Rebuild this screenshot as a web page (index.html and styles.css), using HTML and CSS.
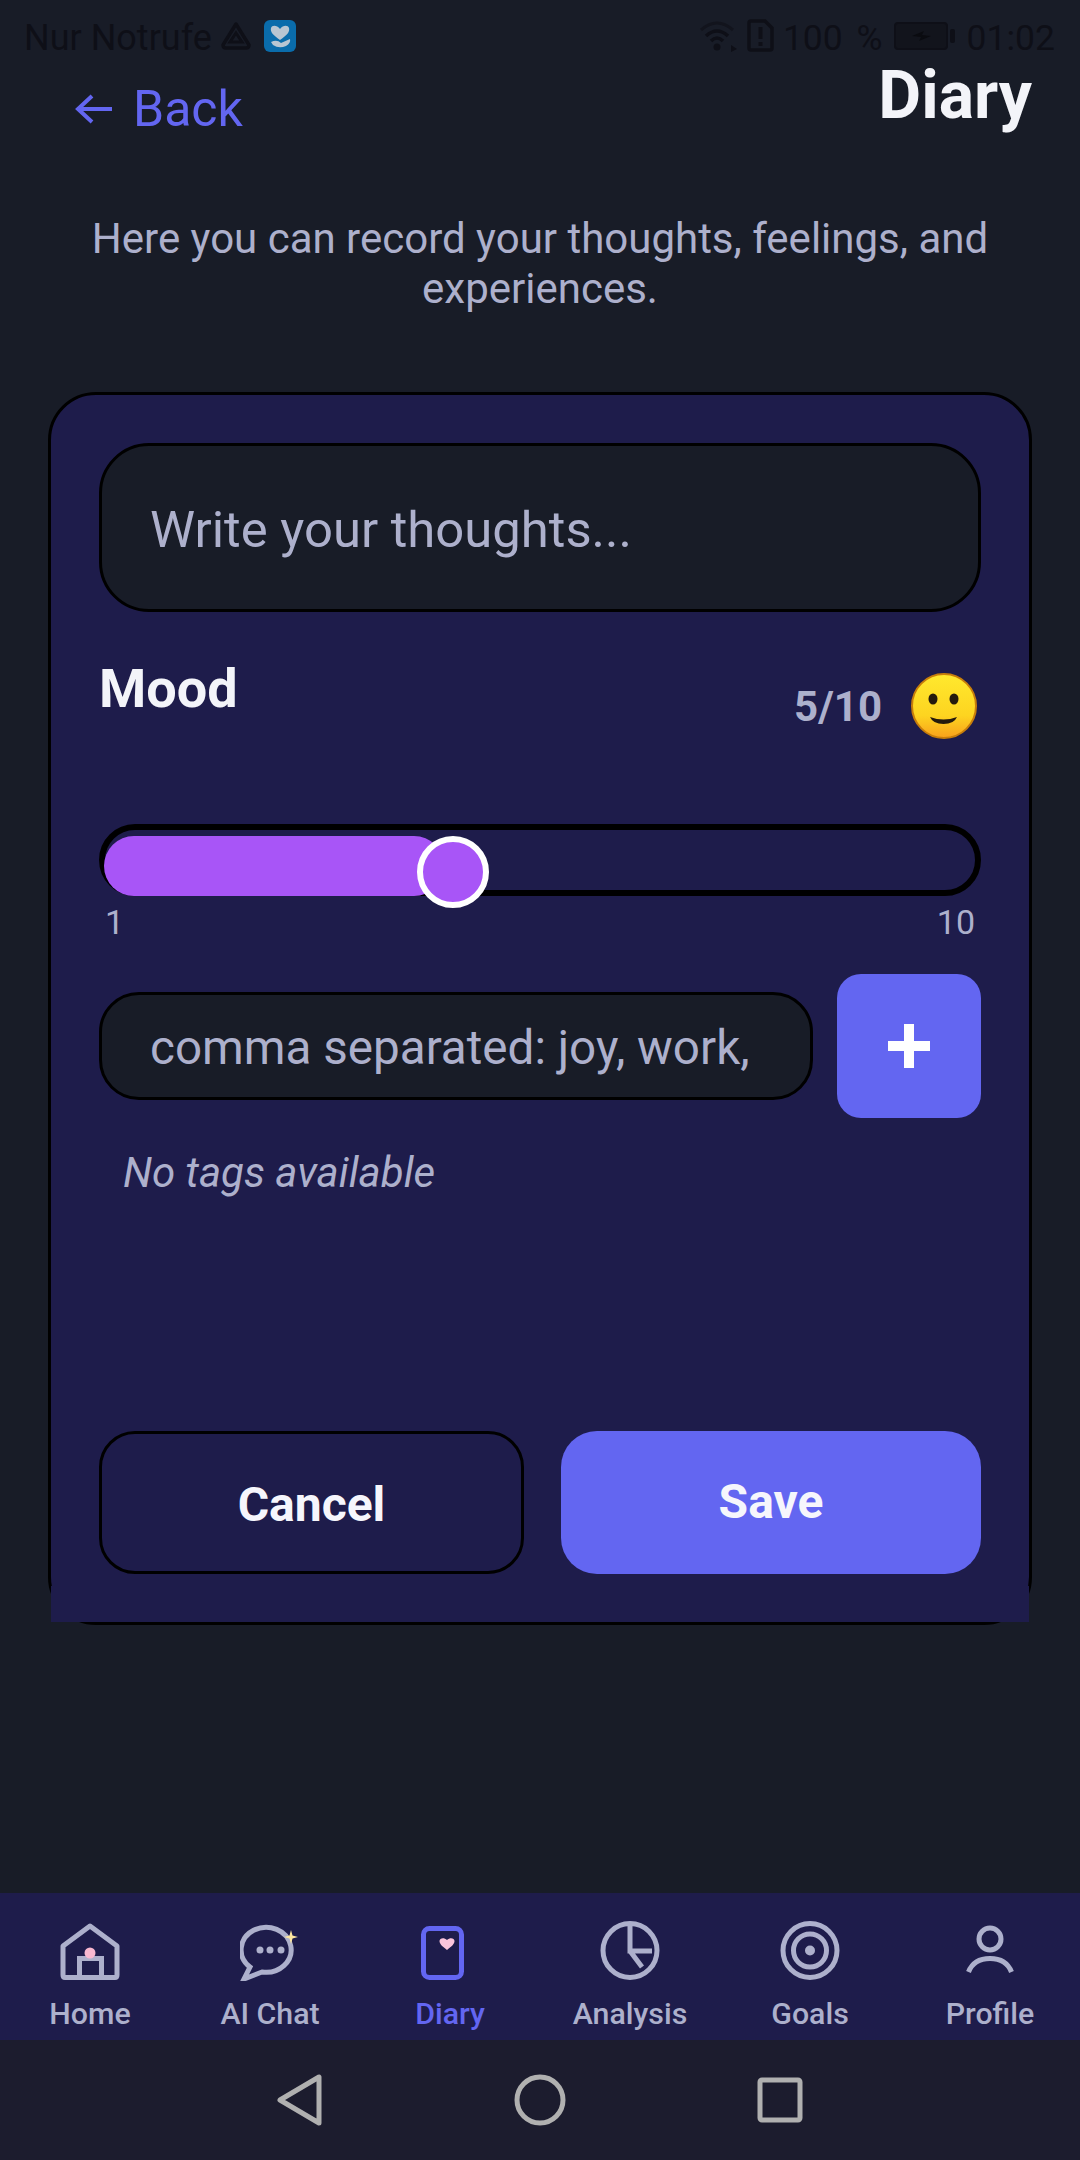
FILE: index.html
```html
<!DOCTYPE html>
<html>
<head>
    <title>Diary</title>
    <link rel="stylesheet" href="styles.css">
</head>
<body>

    <div class="status-bar">
        <div class="status-left">
            <span>Nur Notrufe</span>
            <svg class="drive-icon" width="32" height="30" viewBox="0 0 32 30">
                <path d="M16 3 L29 24 Q29 27 26 27 H6 Q3 27 3 24 Z" fill="none" stroke="#0e0f17" stroke-width="3.5" stroke-linejoin="round"/>
                <path d="M16 12 L22 21 H10 Z" fill="none" stroke="#0e0f17" stroke-width="3"/>
            </svg>
            <svg class="app-icon" width="32" height="32" viewBox="0 0 32 32">
                <rect width="32" height="32" rx="6" fill="#0a6cab"/>
                <path d="M16 20 C9 15 6 12 7 8 C8 5 13 5 16 9 C19 5 24 5 25 8 C26 12 23 15 16 20 Z" fill="#b9c6d2"/>
                <path d="M7 22 Q13 19 17 23 L26 19 Q27 23 22 26 Q15 29 9 25 Z" fill="#b9c6d2"/>
            </svg>
        </div>
        <div class="status-right">
            <svg width="38" height="34" viewBox="0 0 38 34">
                <path d="M1 11 Q17 -3 33 11" fill="none" stroke="#12141d" stroke-width="3"/>
                <path d="M6 17 Q17 7 28 17" fill="none" stroke="#0e0f17" stroke-width="3.5"/>
                <path d="M11 22 Q17 16 23 22" fill="none" stroke="#0e0f17" stroke-width="3.5"/>
                <circle cx="17" cy="28" r="3.5" fill="#0e0f17"/>
                <path d="M31 26 L37 30 L31 33 Z" fill="#0e0f17"/>
            </svg>
            <svg class="sim-icon" width="27" height="33" viewBox="0 0 27 33">
                <path d="M2 4 Q2 2 4 2 H18 L25 9 V29 Q25 31 23 31 H4 Q2 31 2 29 Z" fill="none" stroke="#0e0f17" stroke-width="3.5"/>
                <rect x="11.500" y="8" width="4" height="12" fill="#0e0f17"/>
                <rect x="11.500" y="23" width="4" height="4" fill="#0e0f17"/>
            </svg>
            <span class="battery-level">100 %</span>
            <svg class="battery-icon" width="62" height="30" viewBox="0 0 62 30">
                <rect x="1" y="2" width="52" height="26" rx="3" fill="#12141c" stroke="#0e0f17" stroke-width="2"/>
                <rect x="56" y="8" width="5" height="14" rx="2" fill="#0e0f17"/>
                <path d="M18 15 L30 10 L28 14 L37 15 L25 20 L27 16 Z" fill="#0a0b10"/>
            </svg>
            <span>01:02</span>
        </div>
    </div>

    <div class="header">
        <div class="back-link">
            <svg width="38" height="32" viewBox="0 0 38 32">
                <path d="M17 3 L3 16 L17 29 M3 16 H37" fill="none" stroke="#6366f1" stroke-width="4"/>
            </svg>
            <span>Back</span>
        </div>
        <div class="page-title">Diary</div>
    </div>

    <p class="intro">Here you can record your thoughts, feelings, and experiences.</p>

    <div class="card">
        <div class="entry-input">Write your thoughts...</div>

        <div class="mood-row">
            <div class="mood-label">Mood</div>
            <div class="mood-value">
                <span>5/10</span>
                <svg width="68" height="68" viewBox="0 0 68 68">
                    <defs>
                        <linearGradient id="faceFill" x1="0" y1="0" x2="0" y2="1">
                            <stop offset="0" stop-color="#ffe92e"/>
                            <stop offset="0.65" stop-color="#fdd420"/>
                            <stop offset="1" stop-color="#f9a01b"/>
                        </linearGradient>
                    </defs>
                    <circle cx="34" cy="34" r="32" fill="url(#faceFill)" stroke="#c77d0a" stroke-width="2"/>
                    <ellipse cx="23" cy="27" rx="4.500" ry="5.500" fill="#241a0d"/>
                    <ellipse cx="44" cy="27" rx="4.500" ry="5.500" fill="#241a0d"/>
                    <path d="M20 45 Q33.500 50 47 45 Q44 52 33.500 52 Q23 52 20 45 Z" fill="#241a0d"/>
                </svg>
            </div>
        </div>

        <div class="slider">
            <div class="slider-fill"></div>
            <div class="slider-thumb"></div>
        </div>
        <div class="slider-labels">
            <span>1</span>
            <span>10</span>
        </div>

        <div class="tag-row">
            <div class="tag-input">comma separated: joy, work,</div>
            <div class="tag-add">
                <svg width="42" height="44" viewBox="0 0 42 44">
                    <path d="M16 0 H26 V17 H42 V27 H26 V44 H16 V27 H0 V17 H16 Z" fill="#ffffff"/>
                </svg>
            </div>
        </div>
        <div class="no-tags">No tags available</div>

        <div class="actions">
            <div class="btn-cancel">Cancel</div>
            <div class="btn-save">Save</div>
        </div>
    </div>

    <div class="tab-bar">
        <div class="tab">
            <svg width="60" height="60" viewBox="0 0 60 60" fill="none" stroke="#adb0cc" stroke-width="5">
                <path d="M30 5 L57 25 V54 Q57 56.500 55 56.500 H5 Q3 56.500 3 54 V25 Z" stroke-linejoin="round"/>
                <rect x="19.500" y="37.500" width="22" height="19"/>
                <circle cx="30" cy="32" r="5.500" fill="#f9b8d0" stroke="none"/>
            </svg>
            <span>Home</span>
        </div>
        <div class="tab">
            <svg width="60" height="60" viewBox="0 0 60 60" fill="none" stroke="#adb0cc" stroke-width="5">
                <path d="M10 46 A25 22.500 0 1 1 22 51 L4 58 Z" stroke-linejoin="miter"/>
                <circle cx="20" cy="29" r="3.500" fill="#adb0cc" stroke="none"/>
                <circle cx="30" cy="29" r="3.500" fill="#adb0cc" stroke="none"/>
                <circle cx="41" cy="29" r="3.500" fill="#adb0cc" stroke="none"/>
                <path d="M51 9 L52.500 14.500 L58 16 L52.500 17.500 L51 23 L49.500 17.500 L44 16 L49.500 14.500 Z" fill="#fde6a0" stroke="none"/>
            </svg>
            <span>AI Chat</span>
        </div>
        <div class="tab active">
            <svg width="60" height="60" viewBox="0 0 60 60" fill="none" stroke="#6366f1" stroke-width="5">
                <rect x="3.500" y="7.500" width="38" height="49" rx="6"/>
                <path d="M27 29 C22 25 19.500 23 19.500 20 C19.500 17 24 16 27 19 C30 16 34.500 17 34.500 20 C34.500 23 32 25 27 29 Z" fill="#fbc4dc" stroke="none"/>
            </svg>
            <span>Diary</span>
        </div>
        <div class="tab">
            <svg width="60" height="60" viewBox="0 0 60 60" fill="none" stroke="#adb0cc" stroke-width="5">
                <circle cx="30" cy="29.500" r="27"/>
                <path d="M30 3 V30 H52 M30 30 L42 46"/>
            </svg>
            <span>Analysis</span>
        </div>
        <div class="tab">
            <svg width="60" height="60" viewBox="0 0 60 60" fill="none" stroke="#adb0cc" stroke-width="5">
                <circle cx="30" cy="29.500" r="27"/>
                <circle cx="30" cy="29.500" r="16.500"/>
                <circle cx="30" cy="29.500" r="5" fill="#adb0cc" stroke="none"/>
            </svg>
            <span>Goals</span>
        </div>
        <div class="tab">
            <svg width="60" height="60" viewBox="0 0 60 60" fill="none" stroke="#adb0cc" stroke-width="5">
                <circle cx="30" cy="18" r="11"/>
                <path d="M8.500 51 C12 42 20 37.500 30 37.500 C40 37.500 48 42 51.500 51"/>
            </svg>
            <span>Profile</span>
        </div>
    </div>

    <div class="nav-bar">
        <div class="nav-btn">
            <svg width="50" height="54" viewBox="0 0 50 54" fill="none" stroke="#b0b0b0" stroke-width="5" stroke-linejoin="round">
                <path d="M44 4 V50 L5 27 Z"/>
            </svg>
        </div>
        <div class="nav-btn">
            <svg width="52" height="52" viewBox="0 0 52 52" fill="none" stroke="#b0b0b0" stroke-width="5">
                <circle cx="26" cy="26" r="23"/>
            </svg>
        </div>
        <div class="nav-btn">
            <svg width="46" height="46" viewBox="0 0 46 46" fill="none" stroke="#b0b0b0" stroke-width="5" stroke-linejoin="round">
                <rect x="3" y="3" width="40" height="40" rx="2"/>
            </svg>
        </div>
    </div>

</body>
</html>
```

FILE: styles.css
```css
* {
    box-sizing: border-box;
}
body {
    display: flex;
    flex-direction: column;
    width: 1080px;
    height: 2160px;
    margin: 0;
    overflow: hidden;
    background-color: #181c27;
    font-family: 'Roboto', sans-serif;
    color: #adb0cc;
}

/* Status bar */
.status-bar {
    display: flex;
    justify-content: space-between;
    align-items: center;
    height: 59px;
    padding: 12px 25px 0 24px;
    color: #0e0f17;
}
.status-bar span {
    padding-top: 4px;
}
.status-left,
.status-right {
    display: flex;
    align-items: center;
}
.status-left {
    font-size: 36px;
}
.status-right {
    font-size: 35.5px;
}
.battery-level {
    word-spacing: 5px;
}
.drive-icon {
    margin-left: 8px;
}
.app-icon {
    margin-left: 12px;
}
.sim-icon {
    margin: 0 9px;
}
.battery-icon {
    margin: 0 11px;
}

/* Header */
.header {
    display: flex;
    justify-content: space-between;
    align-items: flex-start;
    padding: 0 48px 0 75px;
}
.back-link {
    display: flex;
    align-items: center;
    gap: 20px;
    margin-top: 21px;
    font-size: 50px;
    color: #6366f1;
}
.page-title {
    margin-top: -2px;
    font-size: 66px;
    font-weight: 700;
    color: #f3f4f9;
}
.intro {
    margin: 76px 70px 0;
    font-size: 42px;
    line-height: 50px;
    text-align: center;
}

/* Card */
.card {
    position: relative;
    width: 984px;
    height: 1233px;
    margin: 78px 0 0 48px;
    padding: 48px;
    border: 3px solid #000000;
    border-radius: 48px;
    background-color: #1e1c4b;
}
.card::after {
    content: "";
    position: absolute;
    left: 0;
    right: 0;
    bottom: 0;
    height: 36px;
    background-color: #1e1c4b;
}
.entry-input {
    display: flex;
    align-items: center;
    height: 169px;
    padding: 4px 48px 0;
    border: 3px solid #000000;
    border-radius: 50px;
    background-color: #181c27;
    font-size: 50.8px;
}

.mood-row {
    display: flex;
    justify-content: space-between;
    align-items: flex-start;
    height: 212px;
    padding: 45px 3px 0 0;
}
.mood-label {
    font-size: 54px;
    font-weight: 700;
    color: #f3f4f9;
}
.mood-value {
    display: flex;
    align-items: center;
    gap: 28px;
    margin-top: 15px;
    font-size: 42px;
    font-weight: 700;
}

.slider {
    position: relative;
    height: 72px;
    border: 6px solid #000000;
    border-radius: 36px;
}
.slider-fill {
    position: absolute;
    left: -1px;
    top: 6px;
    bottom: -6px;
    width: 340px;
    border-radius: 30px;
    background-color: #a855f7;
}
.slider-thumb {
    position: absolute;
    left: 312px;
    top: 6px;
    width: 72px;
    height: 72px;
    border: 6px solid #ffffff;
    border-radius: 50%;
    background-color: #a855f7;
}
.slider-labels {
    display: flex;
    justify-content: space-between;
    padding: 6px 6px 0;
    font-size: 34px;
}

.tag-row {
    display: flex;
    justify-content: space-between;
    align-items: center;
    margin-top: 32px;
}
.tag-input {
    display: flex;
    align-items: center;
    width: 714px;
    height: 108px;
    padding: 4px 48px 0;
    overflow: hidden;
    border: 3px solid #000000;
    border-radius: 40px;
    background-color: #181c27;
    font-size: 47.6px;
    white-space: nowrap;
}
.tag-add {
    display: flex;
    justify-content: center;
    align-items: center;
    width: 144px;
    height: 144px;
    border-radius: 24px;
    background-color: #6366f1;
}
.no-tags {
    margin: 30px 0 0 24px;
    font-size: 42px;
    font-style: italic;
}

.actions {
    display: flex;
    justify-content: space-between;
    margin-top: 234px;
}
.btn-cancel,
.btn-save {
    display: flex;
    justify-content: center;
    align-items: center;
    height: 143px;
    border-radius: 36px;
    font-size: 48px;
    font-weight: 700;
    color: #f6f6fc;
}
.btn-cancel {
    width: 425px;
    padding-top: 4px;
    border: 3px solid #000000;
}
.btn-save {
    width: 420px;
    padding-bottom: 2px;
    background-color: #6366f1;
}

/* Bottom tabs */
.tab-bar {
    display: grid;
    grid-template-columns: repeat(6, 180px);
    height: 147px;
    margin-top: auto;
    padding-top: 28px;
    background-color: #1e1c4b;
}
.tab {
    display: flex;
    flex-direction: column;
    align-items: center;
    gap: 15px;
    font-size: 30.3px;
    font-weight: 500;
}
.tab.active {
    color: #6366f1;
}

/* System nav */
.nav-bar {
    display: flex;
    justify-content: center;
    align-items: center;
    height: 120px;
    background-color: #1c1c2e;
}
.nav-btn {
    display: flex;
    justify-content: center;
    align-items: center;
    width: 240px;
}
```
